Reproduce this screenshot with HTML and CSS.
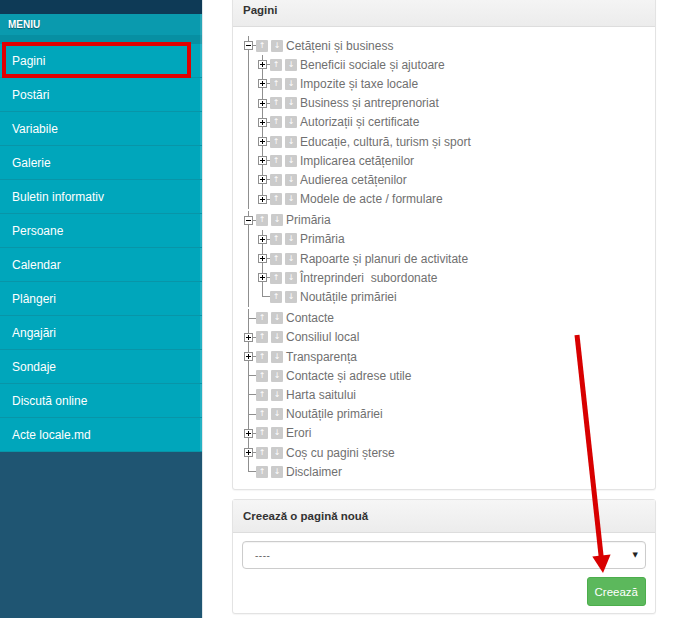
FILE: index.html
```html
<!DOCTYPE html>
<html lang="ro">
<head>
<meta charset="utf-8">
<title>Pagini</title>
<link rel="stylesheet" href="styles.css">
</head>
<body>
<div class="layout">
  <aside class="sidebar">
    <div class="topbar"></div>
    <div class="menu-title">MENIU</div>
    <div class="menu-strip"></div>
    <ul class="menu">
      <li class="menu-item active">Pagini</li>
      <li class="menu-item">Postări</li>
      <li class="menu-item">Variabile</li>
      <li class="menu-item">Galerie</li>
      <li class="menu-item">Buletin informativ</li>
      <li class="menu-item">Persoane</li>
      <li class="menu-item">Calendar</li>
      <li class="menu-item">Plângeri</li>
      <li class="menu-item">Angajări</li>
      <li class="menu-item">Sondaje</li>
      <li class="menu-item">Discută online</li>
      <li class="menu-item">Acte locale.md</li>
    </ul>
  </aside>

  <main class="content">
    <section class="panel panel-pages">
      <div class="panel-heading">Pagini</div>
      <div class="panel-body tree-body">
        <ul class="tree">
          <li>
            <div class="row"><span class="toggle minus"></span><span class="mv">↑</span><span class="mv">↓</span><span class="label">Cetățeni și business</span></div>
            <ul class="tree sub">
              <li><div class="row"><span class="toggle plus"></span><span class="mv">↑</span><span class="mv">↓</span><span class="label">Beneficii sociale și ajutoare</span></div></li>
              <li><div class="row"><span class="toggle plus"></span><span class="mv">↑</span><span class="mv">↓</span><span class="label">Impozite și taxe locale</span></div></li>
              <li><div class="row"><span class="toggle plus"></span><span class="mv">↑</span><span class="mv">↓</span><span class="label">Business și antreprenoriat</span></div></li>
              <li><div class="row"><span class="toggle plus"></span><span class="mv">↑</span><span class="mv">↓</span><span class="label">Autorizații și certificate</span></div></li>
              <li><div class="row"><span class="toggle plus"></span><span class="mv">↑</span><span class="mv">↓</span><span class="label">Educație, cultură, turism și sport</span></div></li>
              <li><div class="row"><span class="toggle plus"></span><span class="mv">↑</span><span class="mv">↓</span><span class="label">Implicarea cetățenilor</span></div></li>
              <li><div class="row"><span class="toggle plus"></span><span class="mv">↑</span><span class="mv">↓</span><span class="label">Audierea cetățenilor</span></div></li>
              <li><div class="row"><span class="toggle plus"></span><span class="mv">↑</span><span class="mv">↓</span><span class="label">Modele de acte / formulare</span></div></li>
            </ul>
          </li>
          <li>
            <div class="row"><span class="toggle minus"></span><span class="mv">↑</span><span class="mv">↓</span><span class="label">Primăria</span></div>
            <ul class="tree sub">
              <li><div class="row"><span class="toggle plus"></span><span class="mv">↑</span><span class="mv">↓</span><span class="label">Primăria</span></div></li>
              <li><div class="row"><span class="toggle plus"></span><span class="mv">↑</span><span class="mv">↓</span><span class="label">Rapoarte și planuri de activitate</span></div></li>
              <li><div class="row"><span class="toggle plus"></span><span class="mv">↑</span><span class="mv">↓</span><span class="label">Întreprinderi&nbsp; subordonate</span></div></li>
              <li><div class="row"><span class="toggle none"></span><span class="mv">↑</span><span class="mv">↓</span><span class="label">Noutățile primăriei</span></div></li>
            </ul>
          </li>
          <li><div class="row"><span class="toggle none"></span><span class="mv">↑</span><span class="mv">↓</span><span class="label">Contacte</span></div></li>
          <li><div class="row"><span class="toggle plus"></span><span class="mv">↑</span><span class="mv">↓</span><span class="label">Consiliul local</span></div></li>
          <li><div class="row"><span class="toggle plus"></span><span class="mv">↑</span><span class="mv">↓</span><span class="label">Transparența</span></div></li>
          <li><div class="row"><span class="toggle none"></span><span class="mv">↑</span><span class="mv">↓</span><span class="label">Contacte și adrese utile</span></div></li>
          <li><div class="row"><span class="toggle none"></span><span class="mv">↑</span><span class="mv">↓</span><span class="label">Harta saitului</span></div></li>
          <li><div class="row"><span class="toggle none"></span><span class="mv">↑</span><span class="mv">↓</span><span class="label">Noutățile primăriei</span></div></li>
          <li><div class="row"><span class="toggle plus"></span><span class="mv">↑</span><span class="mv">↓</span><span class="label">Erori</span></div></li>
          <li><div class="row"><span class="toggle plus"></span><span class="mv">↑</span><span class="mv">↓</span><span class="label">Coș cu pagini șterse</span></div></li>
          <li><div class="row"><span class="toggle none"></span><span class="mv">↑</span><span class="mv">↓</span><span class="label">Disclaimer</span></div></li>
        </ul>
      </div>
    </section>

    <section class="panel panel-create">
      <div class="panel-heading">Creează o pagină nouă</div>
      <div class="panel-body create-body">
        <div class="select-box">
          <span class="select-value">----</span>
          <span class="select-caret">▼</span>
        </div>
        <div class="actions">
          <button class="btn-success" type="button">Creează</button>
        </div>
      </div>
    </section>
  </main>

  <svg class="annotation-arrow" width="678" height="618" viewBox="0 0 678 618" aria-hidden="true">
    <line x1="577" y1="335" x2="601.2" y2="557" stroke="#d80000" stroke-width="5"/>
    <polygon points="603,573 592.3,556.5 610.6,554.6" fill="#d80000"/>
  </svg>
</div>
</body>
</html>
```

FILE: styles.css
```css
*, *::before, *::after { box-sizing: border-box; }

html, body {
  margin: 0;
  padding: 0;
  background: #ffffff;
  font-family: "Liberation Sans", Arial, sans-serif;
  overflow: hidden;
}

.layout {
  position: relative;
  display: flex;
  align-items: flex-start;
  min-height: 618px;
  height: 618px;
}

/* ---------- Sidebar ---------- */
.sidebar {
  flex: none;
  width: 203px;
  align-self: stretch;
  background: #1f5572;
  border-right: 1px solid #dfe7ea;
}

.topbar {
  height: 14px;
  background: #0e3a56;
}

.menu-title {
  height: 21px;
  line-height: 22px;
  padding-left: 8px;
  background: #0a9aae;
  color: #ffffff;
  font-size: 10px;
  font-weight: bold;
  text-shadow: 0 1px 1px rgba(0, 0, 0, 0.45);
  box-shadow: inset -2px 0 0 rgba(255, 255, 255, 0.12);
}

.menu-strip {
  height: 9px;
  background: #078fa2;
  box-shadow: inset -2px 0 0 rgba(255, 255, 255, 0.12);
}

.menu {
  list-style: none;
  margin: 0;
  padding: 0;
}

.menu-item {
  position: relative;
  height: 34px;
  line-height: 34px;
  padding-left: 12px;
  background: #00a6bb;
  border-bottom: 1px solid #0895a8;
  color: #ffffff;
  font-size: 12px;
  box-shadow: inset -2px 0 0 rgba(255, 255, 255, 0.14);
}

/* red annotation box around the active item */
.menu-item.active::after {
  content: "";
  position: absolute;
  z-index: 2;
  left: 2px;
  top: -2px;
  width: 189px;
  height: 36px;
  border: 4px solid #e00000;
}

/* ---------- Content ---------- */
.content {
  flex: none;
  width: 424px;
  margin-left: 29px;
  margin-top: -7px;
  display: flex;
  flex-direction: column;
}

.panel {
  background: #ffffff;
  border: 1px solid #e3e3e3;
  border-radius: 3px;
  box-shadow: 0 1px 1px rgba(0, 0, 0, 0.04);
}

.panel-create {
  margin-top: 9px;
}

.panel-heading {
  height: 33px;
  line-height: 32px;
  padding-left: 10px;
  font-size: 11.5px;
  font-weight: bold;
  color: #333333;
  background: linear-gradient(#f6f6f6, #ececec);
  border-bottom: 1px solid #dddddd;
}

.tree-body {
  padding: 9px 10px 8px 11px;
}

/* ---------- Tree ---------- */
.tree {
  list-style: none;
  margin: 0;
  padding: 0;
}

.tree.sub {
  margin-left: 14px;
  margin-bottom: 2px;
}

.tree li {
  position: relative;
}

.tree li::before {
  content: "";
  position: absolute;
  left: 4px;
  top: 0;
  bottom: 0;
  border-left: 1px solid #8f8f8f;
}

.tree li:last-child::before {
  bottom: auto;
  height: 10px;
}

.tree li::after {
  content: "";
  position: absolute;
  left: 4px;
  top: 9px;
  width: 8px;
  border-top: 1px solid #8f8f8f;
}

.row {
  position: relative;
  z-index: 1;
  display: flex;
  align-items: center;
  height: 19.2px;
}

.toggle {
  position: relative;
  flex: none;
  width: 9px;
  height: 9px;
  margin-right: 3px;
}

.toggle.plus,
.toggle.minus {
  background: #ffffff;
  border: 1px solid #8f8f8f;
}

.toggle.plus::before,
.toggle.minus::before {
  content: "";
  position: absolute;
  left: 1px;
  top: 3px;
  width: 5px;
  height: 1px;
  background: #000000;
}

.toggle.plus::after {
  content: "";
  position: absolute;
  left: 3px;
  top: 1px;
  width: 1px;
  height: 5px;
  background: #000000;
}

.mv {
  flex: none;
  width: 12px;
  height: 12px;
  margin-right: 3px;
  background: #cbcbcb;
  border-radius: 1px;
  color: #ffffff;
  font-family: "DejaVu Sans", sans-serif;
  font-size: 8px;
  line-height: 12px;
  text-align: center;
}

.label {
  font-size: 12px;
  color: #707070;
  white-space: nowrap;
}

/* ---------- Create panel ---------- */
.create-body {
  padding: 8px 9px 7px 9px;
}

.select-box {
  display: flex;
  align-items: center;
  justify-content: space-between;
  height: 28px;
  padding: 0 7px 0 12px;
  border: 1px solid #cccccc;
  border-radius: 4px;
  background: #ffffff;
  box-shadow: inset 0 1px 1px rgba(0, 0, 0, 0.05);
}

.select-value {
  font-size: 10px;
  color: #666666;
  letter-spacing: 0.5px;
}

.select-caret {
  font-family: "DejaVu Sans", sans-serif;
  font-size: 7px;
  color: #222222;
}

.actions {
  display: flex;
  justify-content: flex-end;
  margin-top: 8px;
}

.btn-success {
  height: 29px;
  padding: 0 7px;
  background: #5cb85c;
  border: 1px solid #4cae4c;
  border-radius: 3px;
  color: #ffffff;
  font-family: "Liberation Sans", Arial, sans-serif;
  font-size: 11.5px;
}

/* ---------- Annotation ---------- */
.annotation-arrow {
  position: absolute;
  left: 0;
  top: 0;
  pointer-events: none;
}
```
